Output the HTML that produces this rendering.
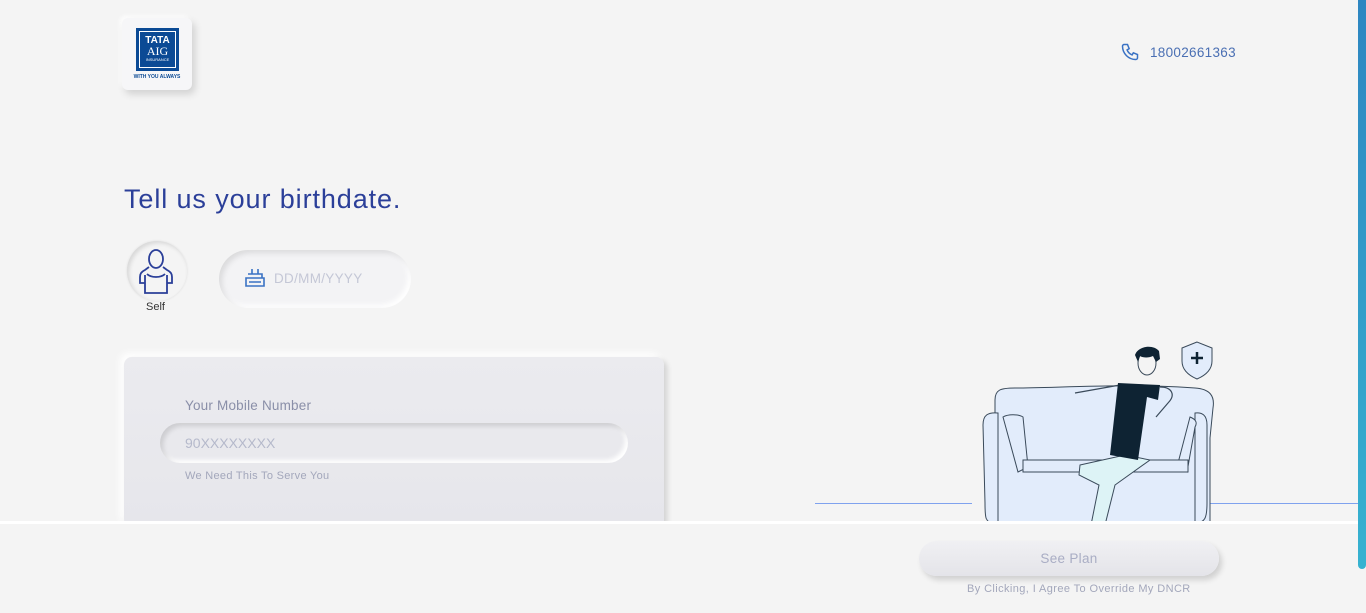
<!DOCTYPE html>
<html><head><meta charset="utf-8">
<style>
*{margin:0;padding:0;box-sizing:border-box}
body{width:1366px;height:613px;overflow:hidden;background:#f4f4f4;font-family:"Liberation Sans",sans-serif;position:relative}
.abs{position:absolute}
.logo{left:122px;top:18px;width:70px;height:72px;background:#f6f6f8;border-radius:6px;box-shadow:3px 4px 8px rgba(0,0,0,.15),-2px -2px 5px #fff}
.lbox{position:absolute;left:14px;top:10px;width:43px;height:43px;background:#0b4a95;border:2px solid #0b4a95;outline:1px solid #fff;outline-offset:-4px;color:#fff;text-align:center}
.phone{left:1120px;top:42px;color:#4a6fb3;font-size:13.5px;letter-spacing:.3px}
h1{position:absolute;left:124px;top:184px;font-size:27px;font-weight:normal;color:#2b3f99;letter-spacing:.9px}
.avatar{left:127px;top:241px;width:60px;height:60px;border-radius:50%;background:#f4f4f4;box-shadow:inset 2px 2px 4px rgba(0,0,0,.12),0 0 2px #ddd}
.date{left:219px;top:250px;width:192px;height:58px;border-radius:29px;background:#f3f3f5;box-shadow:inset 3px 3px 6px rgba(0,0,0,.1),inset -3px -3px 6px #fff}
.card{left:124px;top:357px;width:540px;height:170px;border-radius:8px;background:linear-gradient(180deg,#ebebef,#e6e6eb);box-shadow:3px 3px 6px rgba(0,0,0,.15),-4px -4px 8px #fff}
.inp{left:36px;top:66px;width:468px;height:40px;border-radius:20px;background:#e9e9ed;box-shadow:inset 3px 3px 5px rgba(0,0,0,.12),inset -3px -3px 5px #fff}
.foot{left:0;top:521px;width:1366px;height:92px;background:#f4f4f4;border-top:3px solid #fff}
.btn{left:919px;top:541px;width:300px;height:35px;border-radius:18px;background:linear-gradient(180deg,#f0f0f3,#e4e4e9);box-shadow:3px 4px 6px rgba(0,0,0,.15);color:#a9adc4;font-size:13.5px;text-align:center;line-height:35px;letter-spacing:.3px}
.scroll{left:1358px;top:0;width:8px;height:569px;border-radius:0 0 4px 4px;background:linear-gradient(180deg,#2e86c1,#36b2d0)}
</style></head><body>
<div class="abs logo"><div class="lbox"><div style="font-weight:bold;font-size:10px;margin-top:6px;line-height:10px">TATA</div><div style="font-family:'Liberation Serif',serif;font-size:12px;line-height:11px">AIG</div><div style="font-size:4px;line-height:5px">INSURANCE</div></div><div style="position:absolute;left:6px;top:56px;width:58px;font-size:5px;font-weight:bold;color:#0b4a95;text-align:center">WITH YOU ALWAYS</div></div>
<div class="abs phone"><svg width="20" height="20" viewBox="0 0 24 24" style="vertical-align:-5px;margin-right:10px" fill="none" stroke="#3a72c4" stroke-width="1.8"><path d="M5 3h4l2 5-2.5 1.5a11 11 0 0 0 6 6L16 13l5 2v4a2 2 0 0 1-2 2A16 16 0 0 1 3 5a2 2 0 0 1 2-2z"/></svg>18002661363</div>
<h1>Tell us your birthdate.</h1>
<div class="abs avatar"><svg width="60" height="60" viewBox="0 0 60 60" fill="none" stroke="#2b3f99" stroke-width="1.8"><ellipse cx="29" cy="18" rx="7" ry="9"/><path d="M22 26l-4 3c-4 2-5 4-5 7v6h5v10h22V42h5v-6c0-3-1-5-5-7l-4-3M20 33c4 4 14 4 18 0M18 42V34M40 42V34"/></svg></div>
<div class="abs" style="left:146px;top:301px;font-size:11px;color:#333">Self</div>
<div class="abs date"><svg class="abs" style="left:24px;top:15px" width="24" height="24" viewBox="0 0 24 24" fill="none" stroke="#3a72c4" stroke-width="1.6"><path d="M9 4v5M15 4v5M3 13h18v8H3zM5 9h14v4M6 17h12"/></svg><span class="abs" style="left:55px;top:21px;font-size:13.5px;color:#c4c7d6;letter-spacing:.3px">DD/MM/YYYY</span></div>
<div class="abs card">
<div class="abs" style="left:61px;top:41px;font-size:13.5px;color:#8a8fa8;letter-spacing:.2px">Your Mobile Number</div>
<div class="abs inp"><span class="abs" style="left:25px;top:12px;font-size:14px;color:#b5b9cb">90XXXXXXXX</span></div>
<div class="abs" style="left:61px;top:113px;font-size:11px;color:#a3a7bb;letter-spacing:.3px">We Need This To Serve You</div>
</div>
<div class="abs" style="left:815px;top:503px;width:157px;height:1px;background:#7fa2ee"></div>
<div class="abs" style="left:1203px;top:503px;width:155px;height:1px;background:#7fa2ee"></div>
<svg class="abs" style="left:975px;top:335px" width="255" height="190" viewBox="0 0 255 190">
<g stroke="#3a4a5a" stroke-width="1" fill="#e2ecfb">
<path d="M20 65c0-10 5-12 20-12 40 0 120-5 180 0 15 1 20 8 18 20l-3 30v85H20z"/>
<path d="M8 90c0-10 5-13 15-12v110H20c-10 0-10-5-10-20z"/>
<path d="M232 90c0-10-5-13-12-12v110c10 0 12-5 12-20z"/>
<path d="M28 82c5-3 15-3 20 0l5 50-10 5z"/>
<path d="M215 82c5 2 8 5 5 10l-8 45-10-5z"/>
<path d="M48 125h165v12H48z"/>
</g>
<path d="M100 58l45-8M185 52c12 0 16 8 8 16l-12 14" stroke="#3a4a5a" fill="none" stroke-width="1.2"/>
<path d="M105 130l45-10 25 5-35 25-10 40h-14l8-40-20-10z" fill="#ddf3f6" stroke="#3a4a5a"/>
<path d="M143 48l42 2-2 15-11-3-9 63-28-5z" fill="#0e2333"/>
<ellipse cx="172" cy="28" rx="9" ry="12" fill="#f4f4f4" stroke="#3a4a5a"/>
<path d="M160 20c3-9 18-11 24-4l1 8-4 3-3-6c-4 2-10 2-13 0l-2 6z" fill="#0e2333"/>
<path d="M222 7l-15 6v13c0 10 8 15 15 18 7-3 15-8 15-18V13z" fill="#e2ecfb" stroke="#3a4a5a"/>
<path d="M222 17v12M216 23h12" stroke="#0e2333" stroke-width="2.5"/>
</svg>
<div class="abs foot"></div>
<div class="abs btn">See Plan</div>
<div class="abs" style="left:967px;top:583px;font-size:11px;color:#a3a7bb;letter-spacing:.4px">By Clicking, I Agree To Override My DNCR</div>
<div class="abs scroll"></div>
</body></html>
